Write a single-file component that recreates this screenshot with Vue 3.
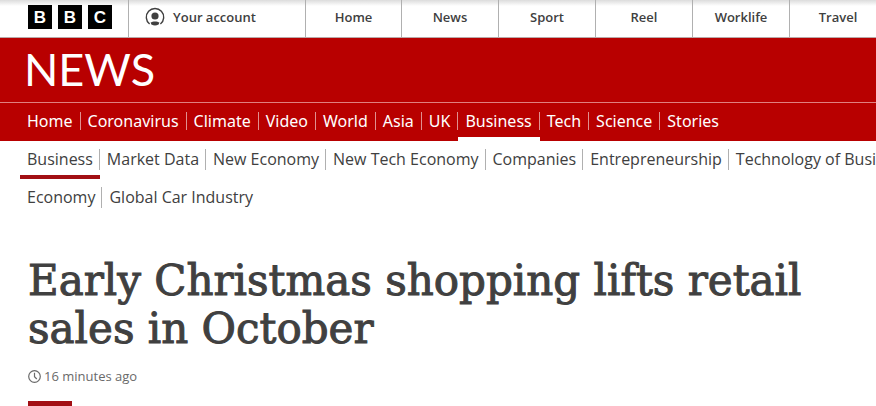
<script setup>
const siteLinks = ['Home', 'News', 'Sport', 'Reel', 'Worklife', 'Travel']
const sections = ['Home', 'Coronavirus', 'Climate', 'Video', 'World', 'Asia', 'UK', 'Business', 'Tech', 'Science', 'Stories']
const topics = ['Business', 'Market Data', 'New Economy', 'New Tech Economy', 'Companies', 'Entrepreneurship', 'Technology of Business']
const moreTopics = ['Economy', 'Global Car Industry']
const topicRows = [topics, moreTopics]
</script>

<template>
  <div class="page">
    <header class="masthead">
      <a class="logo" href="#" aria-label="BBC">
        <span v-for="(letter, i) in 'BBC'" :key="i" class="block">{{ letter }}</span>
      </a>
      <a class="account" href="#">
        <svg width="20" height="20" viewBox="0 0 20 20" aria-hidden="true">
          <path d="M4.6 17A8.7 8.7 0 1 1 15.4 17" fill="none" stroke="#404040" stroke-width="1.4" />
          <circle cx="10" cy="9" r="3.6" fill="#404040" />
          <path d="M5.6 15.6C7.6 14 12.4 14 14.4 15.6L13.6 17.6Q10 19.4 6.4 17.6Z" fill="#404040" />
        </svg>
        <span>Your account</span>
      </a>
      <nav class="site-nav" aria-label="Site">
        <a v-for="link in siteLinks" :key="link" href="#">{{ link }}</a>
      </nav>
    </header>

    <div class="banner">
      <a class="brand" href="#">NEWS</a>
      <nav class="sections" aria-label="News sections">
        <a v-for="s in sections" :key="s" href="#" :class="{ current: s === 'Business' }"><span>{{ s }}</span></a>
      </nav>
    </div>

    <nav class="topics" aria-label="Business topics">
      <div v-for="(row, i) in topicRows" :key="i" class="topic-row">
        <a v-for="t in row" :key="t" href="#" :class="{ current: t === 'Business' }"><span>{{ t }}</span></a>
      </div>
    </nav>

    <main class="article">
      <h1>Early Christmas shopping lifts retail sales in October</h1>
      <p class="time">
        <svg width="13" height="13" viewBox="0 0 13 13" fill="none" stroke="#6a6a6a" aria-hidden="true">
          <circle cx="6.5" cy="6.5" r="5.8" stroke-width="1.2" />
          <path d="M6.5 2.8V6.7L8.8 9" stroke-width="1.2" />
        </svg>
        <time>16 minutes ago</time>
      </p>
      <div class="rule"></div>
    </main>
  </div>
</template>

<style>
body {
  overflow-x: hidden;
  background: #fff;
}
</style>

<style scoped>
.page {
  overflow: hidden;
  font-family: "Open Sans", sans-serif;
  color: #404040;
}
a {
  color: inherit;
  text-decoration: none;
}
.masthead {
  display: flex;
  height: 37px;
  overflow: hidden;
  border-bottom: 1px solid #b9a9a9;
  background: linear-gradient(#dcdcdc, #fff 6px);
}
.logo {
  display: flex;
  flex: none;
  gap: 6px;
  padding: 5px 16px 0 28px;
}
.block {
  width: 24px;
  height: 24px;
  background: #000;
  color: #fff;
  font: 700 17px/25px "Liberation Sans", sans-serif;
  text-align: center;
}
.account {
  display: flex;
  flex: none;
  box-sizing: border-box;
  width: 177px;
  height: 37px;
  gap: 8px;
  padding: 0 16px 3px;
  align-items: center;
  border-left: 1px solid #b0b0b0;
  font-size: 13px;
  font-weight: 600;
}
.site-nav {
  display: flex;
  flex: none;
}
.site-nav a {
  box-sizing: border-box;
  width: 97px;
  padding-bottom: 3px;
  border-left: 1px solid #b0b0b0;
  font-size: 13px;
  font-weight: 600;
  line-height: 34px;
  text-align: center;
}
.site-nav a:first-child {
  width: 96px;
}
.banner {
  background: #b80000;
  color: #fff;
}
.brand {
  display: block;
  padding: 0 24px 2px;
  font: 400 45px/62px Lato, sans-serif;
}
.sections {
  display: flex;
  height: 38px;
  padding: 0 20px;
  border-top: 1px solid #e08080;
  font-family: "Noto Sans", sans-serif;
}
.sections a {
  flex: none;
  box-sizing: border-box;
  height: 38px;
  padding-top: 9px;
  font-size: 16px;
  line-height: 18px;
}
.sections span {
  display: block;
  padding: 0 7px;
  border-right: 1px solid #e09090;
}
.sections a:last-child span {
  border-right: 0;
}
.sections .current {
  border-bottom: 4px solid #fff;
}
.topic-row {
  display: flex;
  height: 38px;
  padding: 0 20px;
}
.topic-row a {
  flex: none;
  box-sizing: border-box;
  height: 38px;
  padding-top: 8px;
  font-size: 16px;
  line-height: 21px;
}
.topic-row span {
  display: block;
  padding: 0 6px 0 7px;
  border-right: 1px solid #b0b0b0;
}
.topic-row a:last-child span {
  border-right: 0;
}
.topic-row .current {
  border-bottom: 4px solid #a20f14;
}
.article {
  padding: 40px 28px 0;
}
h1 {
  margin: 0;
  font: 400 42px/48px "DejaVu Serif", serif;
  -webkit-text-stroke: 1px #404040;
}
.time {
  display: flex;
  align-items: center;
  gap: 3px;
  margin: 15px 0 17px;
  color: #6a6a6a;
  font-size: 13px;
  line-height: 16px;
}
.rule {
  width: 44px;
  height: 5px;
  background: #a20f14;
}
</style>
